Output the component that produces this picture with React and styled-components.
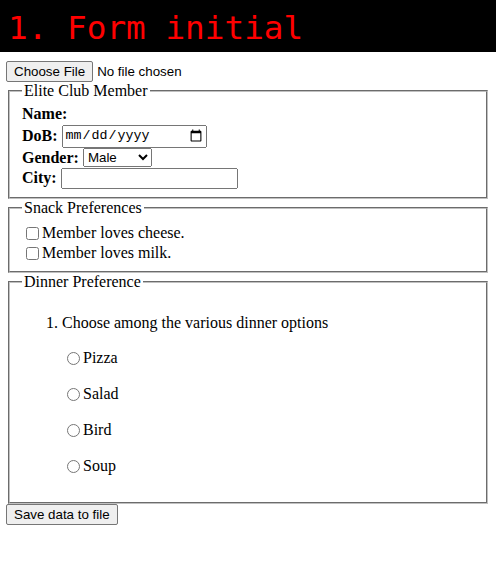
import React from "react";
import styled, { createGlobalStyle } from "styled-components";

const GlobalStyle = createGlobalStyle`
  body {
    margin: 0;
    font-family: "Liberation Serif", "Times New Roman", serif;
    font-size: 16px;
    color: #000;
    background: #fff;
  }
`;

const Header = styled.h1`
  margin: 0;
  height: 52px;
  padding-left: 8px;
  background: #000;
  color: #f00;
  font-family: "DejaVu Sans Mono", "Liberation Mono", monospace;
  font-weight: normal;
  font-size: 32.7px;
  line-height: 56px;
  overflow: hidden;
`;

const Page = styled.div`
  padding: 9px 6px 0;
`;

const Field = styled.fieldset`
  margin: 0 2px;
  padding: ${(p) => p.$pad || "2px 12px 10px"};
  border: 2px groove #c0c0c0;
`;

const Legend = styled.legend`
  padding: 0 2px;
`;

const Row = styled.div`
  display: flex;
  align-items: center;
  gap: 4px;
  min-height: ${(p) => p.$h || 20}px;
`;

const Label = styled.label`
  font-weight: bold;
`;

const UiButton = styled.button`
  font-family: "Liberation Sans", Arial, sans-serif;
  font-size: 13.33px;
  height: 21px;
  padding: 0 7px;
  border: 1px solid #767676;
  border-radius: 2px;
  background: #efefef;
  color: #000;
`;

const FileRow = styled.div`
  display: flex;
  align-items: center;
  gap: 4px;
  font-family: "Liberation Sans", Arial, sans-serif;
  font-size: 13.33px;
`;

const DateInput = styled.input`
  font-family: "Liberation Mono", monospace;
  font-size: 13.33px;
  width: 145px;
  height: 23px;
  box-sizing: border-box;
`;

const Select = styled.select`
  font-family: "Liberation Sans", Arial, sans-serif;
  font-size: 13.33px;
  width: 69px;
  height: 19px;
  box-sizing: border-box;
`;

const TextInput = styled.input`
  width: 177px;
  height: 21px;
  box-sizing: border-box;
`;

const CheckRow = styled.label`
  display: flex;
  align-items: center;
  height: 20px;

  input {
    margin: 0 3px 0 4px;
    width: 13px;
    height: 13px;
  }
`;

const OrderedList = styled.ol`
  margin: 21px 0 0;
  padding-left: 40px;
`;

const Options = styled.div`
  display: flex;
  flex-direction: column;
  gap: 16px;
  margin: 16px 0;
`;

const RadioRow = styled.label`
  display: flex;
  align-items: center;
  height: 20px;

  input {
    margin: 0 3px 0 5px;
    width: 13px;
    height: 13px;
  }
`;

const dinners = ["Pizza", "Salad", "Bird", "Soup"];

export default function App() {
  return (
    <>
      <GlobalStyle />
      <Header>1. Form initial</Header>
      <Page>
        <FileRow>
          <UiButton type="button">Choose File</UiButton>
          <span>No file chosen</span>
        </FileRow>
        <Field $pad="4px 12px 8px">
          <Legend>Elite Club Member</Legend>
          <Row $h={20}>
            <Label>Name:</Label>
          </Row>
          <Row $h={24}>
            <Label>DoB:</Label>
            <DateInput type="date" />
          </Row>
          <Row $h={19}>
            <Label>Gender:</Label>
            <Select defaultValue="Male">
              <option>Male</option>
              <option>Female</option>
            </Select>
          </Row>
          <Row $h={22}>
            <Label>City:</Label>
            <TextInput type="text" />
          </Row>
        </Field>
        <Field $pad="6px 12px 8px">
          <Legend>Snack Preferences</Legend>
          <CheckRow>
            <input type="checkbox" />
            Member loves cheese.
          </CheckRow>
          <CheckRow>
            <input type="checkbox" />
            Member loves milk.
          </CheckRow>
        </Field>
        <Field>
          <Legend>Dinner Preference</Legend>
          <OrderedList>
            <li>
              Choose among the various dinner options
              <Options>
                {dinners.map((d) => (
                  <RadioRow key={d}>
                    <input type="radio" name="dinner" />
                    {d}
                  </RadioRow>
                ))}
              </Options>
            </li>
          </OrderedList>
        </Field>
        <UiButton type="button">Save data to file</UiButton>
      </Page>
    </>
  );
}
